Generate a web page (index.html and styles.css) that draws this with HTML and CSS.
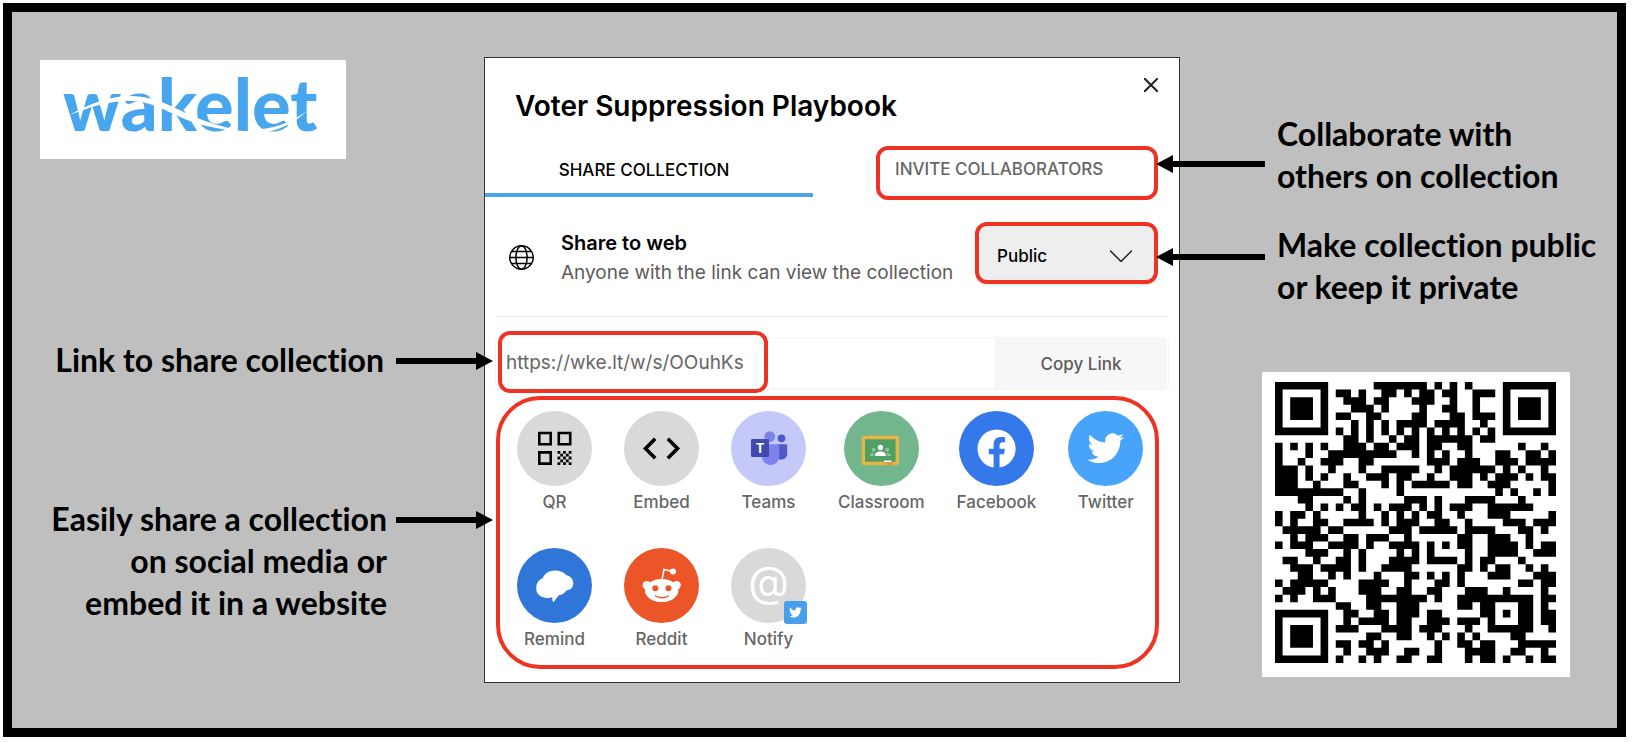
FILE: index.html
```html
<!DOCTYPE html>
<html lang="en">
<head>
    <meta charset="UTF-8">
    <meta name="viewport" content="width=device-width, initial-scale=1.0">
    <title>Sharing a Wakelet collection</title>
    <link rel="stylesheet" href="styles.css">
</head>
<body>
    <main class="slide">
        <div class="left">
            <div class="logo">
                <svg viewBox="0 0 306 99" role="img" aria-label="wakelet">
                    <text class="wordmark" x="23" y="71">wakelet</text>
                    <path fill="#fff" d="M30 55C45 46 68 36 90 36C120 36 138 51 157 58C168 62 180 66 192 69C204 72 212 72 223 69C238 67 254 61 268 50C256 62 240 70 226 72C212 75 198 73 187 70C168 67 154 63 140 57C124 50 112 42 93 41C70 40 50 47 30 55z"/>
                </svg>
            </div>

            <div class="note note-link">
                <p>Link to share collection</p>
                <svg class="arrow" width="97" height="18" viewBox="0 0 97 18"><path d="M0 6h80V0l17 9-17 9v-6H0z"/></svg>
            </div>

            <div class="note note-social">
                <p>Easily share a collection<br>on social media or<br>embed it in a website</p>
                <svg class="arrow" width="97" height="18" viewBox="0 0 97 18"><path d="M0 6h80V0l17 9-17 9v-6H0z"/></svg>
            </div>
        </div>

        <section class="dialog">
            <button class="close" type="button" aria-label="Close">
                <svg width="14" height="14" viewBox="0 0 14 14"><path d="M0 0l14 14M14 0L0 14"/></svg>
            </button>
            <h1>Voter Suppression Playbook</h1>

            <div class="tabs">
                <button class="tab active" type="button">SHARE COLLECTION</button>
                <button class="tab invite marked" type="button">INVITE COLLABORATORS</button>
            </div>

            <div class="web">
                <svg class="globe" width="25" height="25" viewBox="0 0 25 25">
                    <circle cx="12.5" cy="12.5" r="11.7"/>
                    <ellipse cx="12.5" cy="12.5" rx="5.6" ry="11.7"/>
                    <path d="M1 12.5h23M3 6.5h19M3 18.5h19"/>
                </svg>
                <div class="web-text">
                    <h2><label for="access">Share to web</label></h2>
                    <p>Anyone with the link can view the collection</p>
                </div>
                <div class="access marked">
                    <select id="access">
                        <option>Public</option>
                        <option>Private</option>
                    </select>
                    <svg class="chevron" width="22" height="12" viewBox="0 0 22 12"><path d="M0 .5l11 11 11-11"/></svg>
                </div>
            </div>

            <div class="link-row">
                <input class="marked" type="text" value="https://wke.lt/w/s/OOuhKs" aria-label="Link" readonly>
                <button type="button">Copy Link</button>
            </div>

            <div class="share marked">
                <button class="item" type="button">
                    <svg class="icon" viewBox="0 0 75 75">
                        <circle cx="37.5" cy="37.5" r="37.5" fill="#d9d9d9"/>
                        <path fill="none" stroke="#000" stroke-width="2.6" d="M22.3 22h11.4v11.2H22.3zM41.8 22h11.4v11.2H41.8zM22.3 41.4h11.4v11.2H22.3z"/>
                        <path stroke="#000" stroke-width="2.8" stroke-dasharray="2.8" d="M40.5 41.4h14M43.3 44.2h11.2M40.5 47h14M43.3 49.8h11.2M40.5 52.6h14"/>
                    </svg>
                    QR
                </button>
                <button class="item" type="button">
                    <svg class="icon" viewBox="0 0 75 75">
                        <circle cx="37.5" cy="37.5" r="37.5" fill="#d9d9d9"/>
                        <path fill="none" stroke="#000" stroke-width="3.6" d="M31.2 27.8l-9.7 9.7 9.7 9.7M43.8 27.8l9.7 9.7-9.7 9.7"/>
                    </svg>
                    Embed
                </button>
                <button class="item" type="button">
                    <svg class="icon" viewBox="0 0 75 75">
                        <circle cx="37.5" cy="37.5" r="37.5" fill="#c5c9fa"/>
                        <circle cx="50.5" cy="27.3" r="3.9" fill="#5059c9"/>
                        <path fill="#5059c9" d="M46 33.3h9.2c.6 0 1 .5 1 1V43a6 6 0 0 1-10.2 4z"/>
                        <circle cx="38.8" cy="25.6" r="5.4" fill="#7b83eb"/>
                        <path fill="#7b83eb" d="M31 33.3h16c.6 0 1.2.5 1.2 1.1v11a8.6 8.6 0 0 1-17.2 0z"/>
                        <rect x="20" y="28" width="18" height="18" rx="1.2" fill="#3f4ab0"/>
                        <text class="teams-t" x="29" y="41.5">T</text>
                    </svg>
                    Teams
                </button>
                <button class="item" type="button">
                    <svg class="icon" viewBox="0 0 75 75">
                        <circle cx="37.5" cy="37.5" r="37.5" fill="#72b68d"/>
                        <rect x="19.3" y="26.5" width="34" height="26" rx="1" fill="#4fa065" stroke="#e9b544" stroke-width="3.4"/>
                        <circle cx="36.4" cy="36.5" r="2.7" fill="#fff"/>
                        <path fill="#fff" d="M30.8 45c0-3 2.6-4.4 5.6-4.4S42 42 42 45z"/>
                        <path fill="#8cc3a0" d="M25.8 45c0-2.5 2-3.3 5-3-1 .8-1.3 1.8-1.3 3zM47 45c0-2.5-2-3.3-5-3 1 .8 1.3 1.8 1.3 3z"/>
                        <circle cx="29.7" cy="38.8" r="2" fill="#8cc3a0"/>
                        <circle cx="43.2" cy="38.8" r="2" fill="#8cc3a0"/>
                        <path fill="#fff" d="M40 49.5h7.3v1.5H40z"/>
                        <path fill="#d59a45" d="M40 51h7.3l3.2 3.2h-7.5z"/>
                    </svg>
                    Classroom
                </button>
                <button class="item" type="button">
                    <svg class="icon" viewBox="0 0 75 75">
                        <circle cx="37.5" cy="37.5" r="37.5" fill="#3578ea"/>
                        <path fill="#fff" transform="translate(18.5 18.5) scale(1.59)" d="M24 12.073c0-6.627-5.373-12-12-12s-12 5.373-12 12c0 5.99 4.388 10.954 10.125 11.854v-8.385H7.078v-3.47h3.047V9.43c0-3.007 1.792-4.669 4.533-4.669 1.312 0 2.686.235 2.686.235v2.953H15.83c-1.491 0-1.956.925-1.956 1.874v2.25h3.328l-.532 3.47h-2.796v8.385C19.612 23.027 24 18.062 24 12.073z"/>
                    </svg>
                    Facebook
                </button>
                <button class="item" type="button">
                    <svg class="icon" viewBox="0 0 75 75">
                        <circle cx="37.5" cy="37.5" r="37.5" fill="#48a3fa"/>
                        <path id="bird" fill="#fff" transform="translate(19.5 19) scale(1.52)" d="M23.953 4.57a10 10 0 01-2.825.775 4.958 4.958 0 002.163-2.723c-.951.555-2.005.959-3.127 1.184a4.92 4.92 0 00-8.384 4.482C7.69 8.095 4.067 6.13 1.64 3.162a4.822 4.822 0 00-.666 2.475c0 1.71.87 3.213 2.188 4.096a4.904 4.904 0 01-2.228-.616v.06a4.923 4.923 0 003.946 4.827 4.996 4.996 0 01-2.212.085 4.936 4.936 0 004.604 3.417 9.867 9.867 0 01-6.102 2.105c-.39 0-.779-.023-1.17-.067a13.995 13.995 0 007.557 2.209c9.053 0 13.998-7.496 13.998-13.985 0-.21 0-.42-.015-.63A9.935 9.935 0 0024 4.59z"/>
                    </svg>
                    Twitter
                </button>
                <button class="item" type="button">
                    <svg class="icon" viewBox="0 0 75 75">
                        <circle cx="37.5" cy="37.5" r="37.5" fill="#2f76d8"/>
                        <path fill="#fff" d="M38 22.5c5 0 9 1.5 11 4.5 4.5 1 7.3 4 7.3 8.3 0 4.5-3.2 7-7 7.2-1.5 2.5-4 4.3-7.5 4.8L36.8 53.7c-.6.4-1.2.1-1.2-.6l-.5-4.1c-1.5 1-4 1.3-7 .8-5-.8-8.9-4-8.9-9.5 0-5 2.5-8.8 6.5-10.1 2-5 6.5-7.7 12.3-7.7z"/>
                    </svg>
                    Remind
                </button>
                <button class="item" type="button">
                    <svg class="icon" viewBox="0 0 75 75">
                        <circle cx="37.5" cy="37.5" r="37.5" fill="#eb5528"/>
                        <path fill="none" stroke="#fff" stroke-width="1.5" d="M38 32l2-10.5 8 1.8"/>
                        <circle cx="49" cy="23.6" r="3" fill="#fff"/>
                        <circle cx="22.8" cy="37.3" r="4.2" fill="#fff"/>
                        <circle cx="52.6" cy="37.3" r="4.2" fill="#fff"/>
                        <ellipse cx="37.7" cy="42.5" rx="16.7" ry="11.5" fill="#fff"/>
                        <circle cx="31.3" cy="40.3" r="3" fill="#eb5528"/>
                        <circle cx="44.5" cy="40.3" r="3" fill="#eb5528"/>
                        <path fill="none" stroke="#eb5528" stroke-width="1.4" stroke-linecap="round" d="M31.5 48q6.5 3.5 13 0"/>
                    </svg>
                    Reddit
                </button>
                <button class="item" type="button">
                    <svg class="icon" viewBox="0 0 75 75">
                        <circle cx="37.5" cy="37.5" r="37.5" fill="#d9d9d9"/>
                        <text class="at" x="37.5" y="49">@</text>
                        <rect x="53" y="53" width="23" height="23" rx="3" fill="#4a9fec"/>
                        <use href="#bird" transform="translate(51.5 51.5) scale(.345)"/>
                    </svg>
                    Notify
                </button>
            </div>
        </section>

        <div class="right">
            <div class="note note-collab">
                <svg class="arrow" width="109" height="18" viewBox="0 0 109 18"><path d="M109 6H17V0L0 9l17 9v-6h92z"/></svg>
                <p>Collaborate with<br>others on collection</p>
            </div>

            <div class="note note-public">
                <svg class="arrow" width="109" height="18" viewBox="0 0 109 18"><path d="M109 6H17V0L0 9l17 9v-6h92z"/></svg>
                <p>Make collection public<br>or keep it private</p>
            </div>

            <div class="qr">
                <svg viewBox="0 0 37 37" role="img" aria-label="QR code">
                    <!-- one line of the path per row of modules -->
                    <path transform="translate(0 .5)" d="
                        M0 0h7M13 0h7M21 0h1M23 0h1M25 0h1M30 0h7
                        M0 1h1M6 1h1M8 1h2M11 1h1M14 1h2M17 1h1M19 1h2M22 1h2M26 1h3M30 1h1M36 1h1
                        M0 2h1M2 2h3M6 2h1M9 2h3M13 2h2M18 2h3M23 2h1M26 2h1M30 2h1M32 2h3M36 2h1
                        M0 3h1M2 3h3M6 3h1M10 3h3M14 3h1M19 3h1M22 3h2M26 3h1M30 3h1M32 3h3M36 3h1
                        M0 4h1M2 4h3M6 4h1M8 4h2M12 4h2M18 4h2M23 4h2M26 4h3M30 4h1M32 4h3M36 4h1
                        M0 5h1M6 5h1M10 5h1M12 5h1M14 5h1M16 5h4M21 5h4M27 5h1M30 5h1M36 5h1
                        M0 6h7M8 6h1M10 6h1M12 6h1M14 6h1M16 6h1M18 6h1M20 6h1M22 6h1M24 6h1M26 6h1M28 6h1M30 6h7
                        M9 7h2M12 7h1M15 7h1M17 7h2M20 7h6M27 7h2
                        M0 8h1M2 8h1M4 8h1M6 8h1M9 8h3M13 8h2M16 8h3M20 8h2M24 8h2M32 8h1M35 8h1
                        M0 9h1M4 9h1M7 9h9M18 9h1M20 9h1M22 9h1M25 9h1M29 9h2M33 9h2M36 9h1
                        M0 10h1M3 10h1M6 10h3M11 10h2M20 10h3M24 10h3M29 10h3M33 10h4
                        M0 11h3M4 11h1M7 11h1M11 11h1M14 11h5M21 11h1M23 11h6M30 11h1M32 11h1M35 11h1
                        M0 12h3M4 12h1M6 12h1M9 12h1M12 12h3M16 12h2M20 12h1M23 12h3M27 12h1M29 12h3M33 12h1M35 12h2
                        M0 13h3M5 13h1M9 13h2M14 13h1M16 13h1M18 13h5M24 13h2M28 13h3M36 13h1
                        M0 14h9M11 14h1M16 14h1M29 14h1M31 14h1M34 14h1M36 14h1
                        M3 15h2M9 15h1M11 15h1M17 15h3M21 15h1M25 15h4M32 15h1
                        M4 16h1M6 16h1M8 16h1M10 16h2M13 16h1M15 16h3M19 16h1M21 16h1M23 16h3M28 16h6
                        M0 17h1M2 17h2M5 17h1M11 17h1M14 17h1M16 17h1M18 17h1M20 17h2M24 17h1M28 17h3M36 17h1
                        M0 18h1M2 18h1M5 18h2M9 18h4M14 18h1M16 18h3M21 18h2M25 18h1M30 18h3M34 18h3
                        M1 19h5M7 19h2M15 19h3M19 19h5M25 19h4M32 19h2M35 19h1
                        M2 20h1M4 20h3M9 20h2M12 20h3M17 20h1M24 20h2M28 20h3M33 20h1
                        M0 21h1M2 21h3M7 21h4M12 21h1M15 21h4M20 21h1M22 21h1M24 21h2M28 21h4M33 21h1M35 21h2
                        M4 22h3M9 22h1M11 22h1M16 22h1M18 22h1M20 22h1M25 22h1M28 22h4M34 22h3
                        M1 23h2M5 23h1M8 23h2M11 23h1M15 23h4M20 23h4M25 23h1M27 23h2M32 23h1
                        M2 24h3M6 24h4M11 24h1M14 24h4M24 24h2M27 24h1M29 24h2M33 24h1M35 24h1
                        M3 25h2M7 25h1M9 25h1M13 25h1M17 25h2M20 25h1M22 25h1M24 25h1M28 25h3M34 25h3
                        M0 26h1M2 26h5M11 26h4M17 26h1M21 26h2M24 26h1M32 26h2M35 26h2
                        M1 27h3M5 27h1M7 27h1M11 27h3M16 27h2M20 27h2M25 27h3M30 27h1M35 27h1
                        M0 28h1M2 28h1M5 28h3M12 28h8M21 28h1M24 28h10M35 28h2
                        M8 29h2M12 29h2M16 29h3M24 29h2M27 29h2M32 29h2M35 29h1
                        M0 30h7M9 30h2M13 30h2M16 30h3M20 30h2M27 30h2M30 30h1M32 30h2M35 30h2
                        M0 31h1M6 31h1M9 31h1M11 31h4M16 31h2M20 31h3M24 31h3M28 31h1M32 31h2M35 31h2
                        M0 32h1M2 32h3M6 32h1M8 32h3M14 32h4M19 32h3M25 32h1M28 32h6M36 32h1
                        M0 33h1M2 33h3M6 33h1M12 33h2M16 33h2M20 33h1M22 33h1M24 33h1M26 33h1M31 33h2
                        M0 34h1M2 34h3M6 34h1M8 34h2M11 34h2M14 34h1M21 34h1M24 34h2M27 34h2M32 34h5
                        M0 35h1M6 35h1M9 35h1M12 35h3M17 35h2M21 35h1M25 35h4M31 35h2M35 35h1
                        M0 36h7M8 36h1M11 36h1M13 36h1M16 36h2M20 36h2M25 36h1M27 36h2M30 36h1M33 36h1M35 36h2"/>
                </svg>
            </div>
        </div>
    </main>
</body>
</html>
```

FILE: styles.css
```css
* {
    box-sizing: border-box;
}
body {
    margin: 3px 6px 5px 3px;
    background: #fff;
    color: #000;
    font-family: Inter, "Liberation Sans", sans-serif;
}
h1, h2, p {
    margin: 0;
}
button, input, select {
    margin: 0;
    padding: 0;
    border: none;
    background: none;
    color: inherit;
    font: inherit;
}
svg {
    display: block;
}
.slide {
    display: grid;
    grid-template-columns: 472fr 696fr 437fr;
    align-items: start;
    padding: 45px 0;
    border: 9px solid #000;
    background: #bfbfbf;
}

/* red outline round the parts the notes talk about */
.marked {
    border: 4px solid #ee3224;
    border-radius: 12px;
}

/* notes */
.note {
    display: flex;
    position: relative;
    z-index: 1;
    font-family: Lato, "Liberation Sans", sans-serif;
    font-size: 32px;
    font-weight: 700;
    font-variant-ligatures: none;
    line-height: 42px;
    white-space: nowrap;
}
.arrow {
    flex: none;
}
.left .note {
    justify-content: flex-end;
    gap: 12px;
    margin-right: -9px;
    text-align: right;
}
.left .arrow {
    margin-top: 13px;
}
.note-link {
    margin-top: 180px;
}
.left .note-social {
    gap: 9px;
    margin-top: 117px;
}
.right .note {
    gap: 12px;
    margin-left: -24px;
}
.note-collab {
    margin-top: 56px;
}
.note-collab .arrow {
    margin-top: 42px;
}
.note-public {
    margin-top: 27px;
}
.note-public .arrow {
    margin-top: 24px;
}

.logo {
    width: 306px;
    margin: 3px 0 0 28px;
    background: #fff;
}
.wordmark {
    fill: #48a6ee;
    font-family: Lato, sans-serif;
    font-size: 72px;
    font-weight: 900;
}
.qr {
    width: 308px;
    margin: 64px 0 0 82px;
    padding: 10px 14px 14px 13px;
    background: #fff;
}
.qr path {
    stroke: #000;
    stroke-width: 1;
}

/* dialog */
.dialog {
    position: relative;
    padding: 30px 0 13px;
    border: 1px solid #333;
    background: #fff;
}
.close {
    position: absolute;
    top: 20px;
    right: 21px;
}
.close path, .globe, .chevron {
    fill: none;
    stroke: #222;
    stroke-width: 2;
}
h1 {
    padding-left: 30px;
    font-size: 28px;
    font-weight: 600;
    line-height: 36px;
}
.tabs {
    display: flex;
    justify-content: space-between;
    align-items: flex-start;
    margin: 22px 21px 0 0;
    font-size: 17px;
    font-weight: 500;
}
.tab {
    height: 51px;
}
.active {
    width: 328px;
    padding-right: 10px;
    border-bottom: 4px solid #48a6ee;
}
.invite {
    width: 282px;
    height: 54px;
    padding: 0 0 8px 15px;
    color: #666;
    text-align: left;
}
.web {
    display: flex;
    align-items: flex-end;
    margin: 22px 10px 0;
    padding: 0 11px 29px 14px;
    border-bottom: 1px solid #ececec;
}
.globe {
    margin-bottom: 17px;
    stroke: #000;
    stroke-width: 1.5;
}
.web-text {
    flex: 1;
    padding-left: 27px;
    font-size: 19px;
    line-height: 29px;
    white-space: nowrap;
}
.web-text h2 {
    font-size: 20px;
    font-weight: 600;
}
.web-text p {
    color: #5c5c5c;
}
.access {
    position: relative;
    width: 183px;
    height: 62px;
    margin-bottom: 3px;
    background: #eee;
    box-shadow: 0 3px 0 -1px #eee;
}
.access select {
    width: 100%;
    height: 100%;
    padding: 6px 0 0 18px;
    font-size: 17px;
    font-weight: 500;
    appearance: none;
}
.chevron {
    position: absolute;
    top: 24px;
    right: 22px;
    stroke-width: 1.5;
    pointer-events: none;
}
.link-row {
    display: flex;
    justify-content: space-between;
    height: 53px;
    margin: 20px 10px 0;
    border: 1px solid #f4f4f4;
    border-radius: 5px;
    color: #666;
}
.link-row input {
    width: 270px;
    height: 62px;
    margin: -7px 0 0 2px;
    padding-left: 4px;
    font-size: 19px;
}
.link-row button {
    width: 172px;
    margin-right: 1px;
    border-radius: 0 4px 4px 0;
    background: #f7f7f7;
    color: #5c5c5c;
    font-size: 17px;
    font-weight: 500;
}
.share {
    display: flex;
    flex-wrap: wrap;
    gap: 34px 32px;
    margin: 6px 20px 0 11px;
    padding: 11px 0 14px 17px;
    border-radius: 44px;
}
.item {
    display: flex;
    flex-direction: column;
    align-items: center;
    gap: 4px;
    min-width: 75px;
    color: #666;
    font-size: 17px;
    font-weight: 500;
    line-height: 24px;
}
.icon {
    width: 75px;
    height: 75px;
    overflow: visible;
}
.teams-t {
    fill: #fff;
    font-size: 13px;
    font-weight: 700;
    text-anchor: middle;
}
.at {
    fill: #fff;
    font-size: 42px;
    font-weight: 400;
    text-anchor: middle;
}
```
